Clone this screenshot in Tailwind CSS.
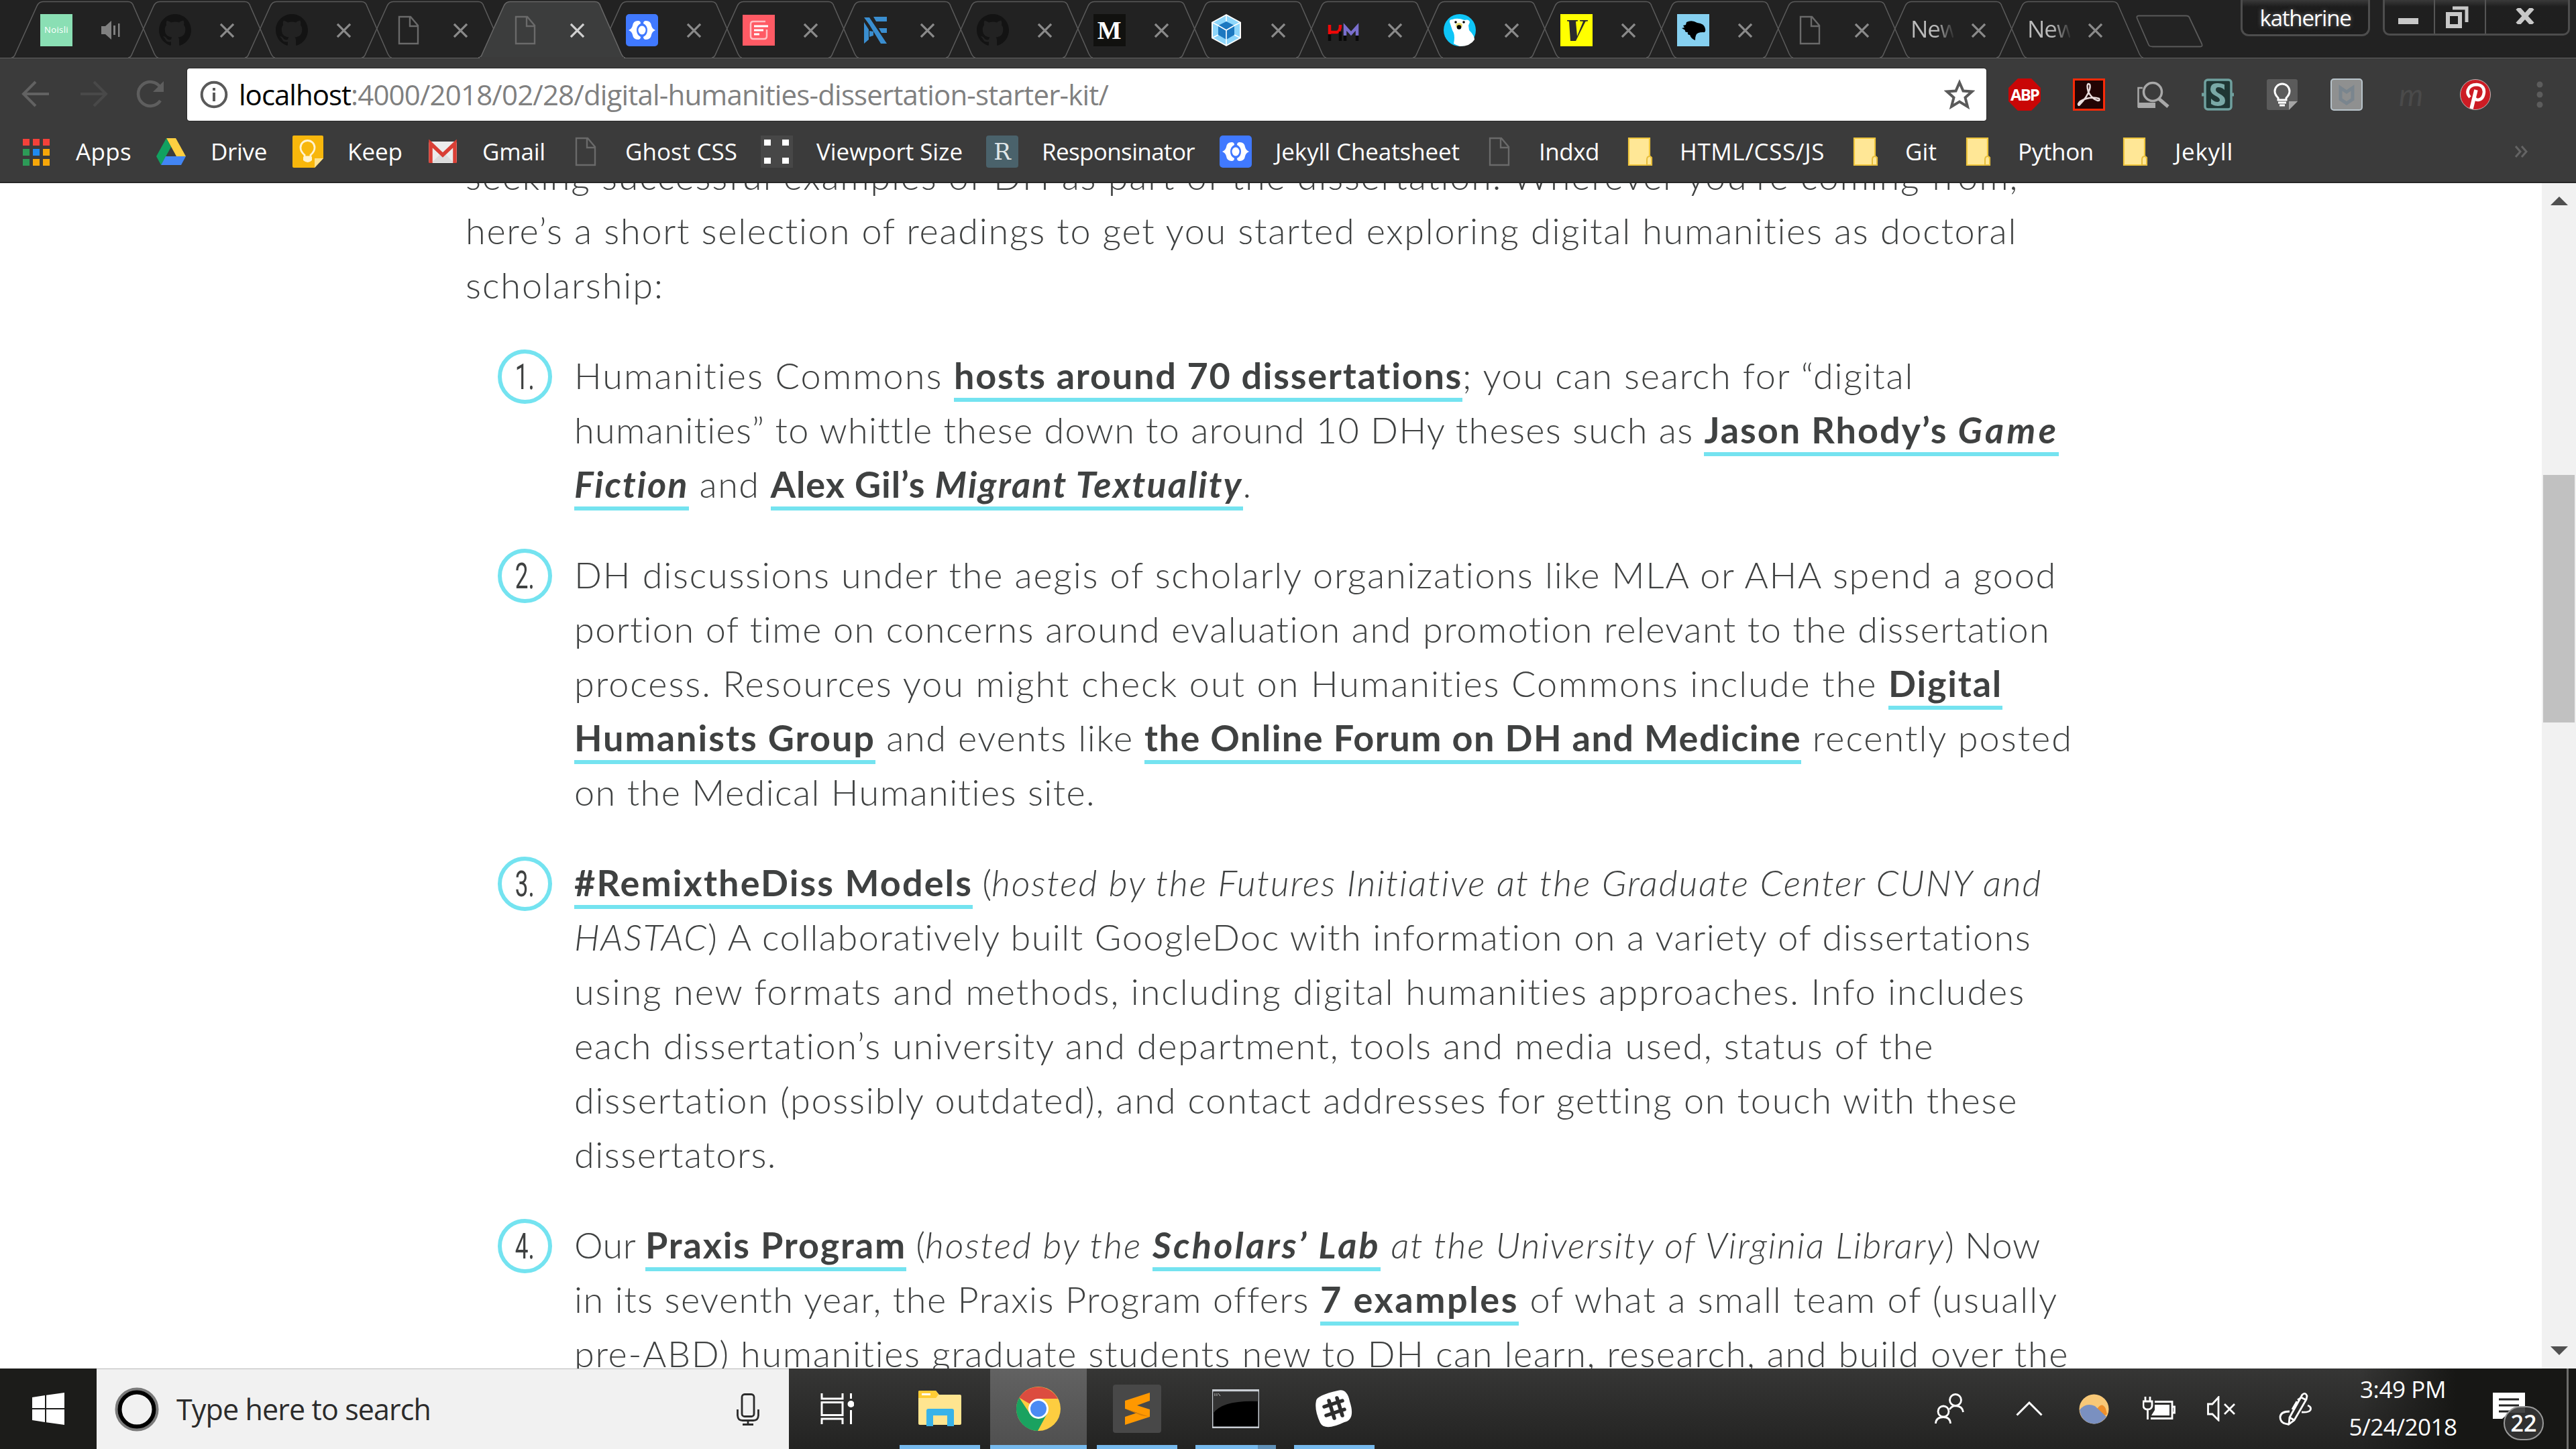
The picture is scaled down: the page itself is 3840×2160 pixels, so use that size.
<!DOCTYPE html>
<html lang="en">
<head>
<meta charset="utf-8">
<title>Digital Humanities Dissertation Starter Kit</title>
<script src="https://cdn.jsdelivr.net/npm/@tailwindcss/browser@4"></script>
</head>
<body class="w-[3840px] h-[2160px] overflow-hidden bg-white flex flex-col font-['Open_Sans','Noto_Sans',sans-serif]">
<svg width="0" height="0" class="absolute">
  <defs>
    <symbol id="tab" viewBox="0 0 218 90" overflow="visible"><path d="M-1 86 Q3 86 5 80 L37 9 Q40 2.500 46 2.500 H173 Q179 2.500 181 9 L212 80 Q215 86 218 86"/></symbol>
    <symbol id="x" viewBox="0 0 24 24"><path d="M2 2 L22 22 M22 2 L2 22" fill="none" stroke="currentColor" stroke-width="3.400"/></symbol>
    <symbol id="page" viewBox="0 0 48 48"><path d="M10 4 H27 L38 17 V44 H10 Z M26 5 V18 H38" fill="none" stroke="#6a6a6a" stroke-width="2.400"/></symbol>
    <symbol id="cat" viewBox="0 0 16 16"><path fill="#131313" d="M8 0C3.580 0 0 3.580 0 8c0 3.540 2.290 6.530 5.470 7.590.4.070.55-.17.55-.38 0-.19-.01-.82-.01-1.490-2.010.37-2.530-.49-2.690-.94-.09-.23-.48-.94-.82-1.130-.28-.15-.68-.52-.01-.53.63-.01 1.080.58 1.230.82.72 1.210 1.870.87 2.330.66.07-.52.28-.87.51-1.070-1.780-.2-3.640-.89-3.640-3.950 0-.87.31-1.590.82-2.150-.08-.2-.36-1.020.08-2.120 0 0 .67-.21 2.200.82.64-.18 1.320-.27 2-.27s1.360.09 2 .27c1.530-1.040 2.200-.82 2.200-.82.44 1.100.16 1.920.08 2.120.51.56.82 1.270.82 2.150 0 3.070-1.870 3.750-3.650 3.950.29.25.54.73.54 1.480 0 1.070-.01 1.930-.01 2.200 0 .21.15.46.55.38A8.010 8.010 0 0 0 16 8c0-4.420-3.580-8-8-8"/></symbol>
    <symbol id="brace" viewBox="0 0 48 48"><rect width="48" height="48" rx="5" fill="#4079ff"/><path d="M18 10Q11 10 10 17Q9 22 4 24Q9 26 10 31Q11 38 18 38Q22 38 22 34Q16 31 16 24Q16 17 22 14Q22 10 18 10zM30 10Q37 10 38 17Q39 22 44 24Q39 26 38 31Q37 38 30 38Q26 38 26 34Q32 31 32 24Q32 17 26 14Q26 10 30 10z" fill="#fff"/><ellipse cx="24" cy="24" rx="5.500" ry="6.500" fill="#fff"/></symbol>
    <symbol id="folder" viewBox="0 0 48 48"><path d="M7 4 H38 V31 L41 33 V44 H7 Z" fill="#ffe796" stroke="#f0c63c" stroke-width="2.200"/><path d="M34 44 V36 Q34 31 38 31 Q41 31 41 36 V44 Z" fill="#ffe796" stroke="#e6bd3c" stroke-width="2"/></symbol>
  </defs>
</svg>

<!-- tab strip -->
<header class="relative h-[86px] shrink-0 bg-[#222] flex">
  <div id="tabs" class="flex w-[3180px] shrink-0 pl-[38px]">
    <div>
      <div class="relative mt-[4px] -ml-[3px] w-[48px] h-[48px] bg-[#8adfb4] text-white text-[13px] flex items-center justify-center shrink-0"><span data-w="36">Noisli</span></div>
      <svg class="relative mt-[4px] ml-[43px]" width="28" height="28" viewBox="0 0 28 28" fill="#808080"><path d="M0 8h6l9-8v28l-9-8H0z"/><path d="M18 7h3v14h-3zM25 4h2.500v20H25z"/></svg></div>
    <div data-close><svg class="relative mt-[4px]" width="48" height="48"><use href="#cat"/></svg></div>
    <div data-close><svg class="relative mt-[4px]" width="48" height="48"><use href="#cat"/></svg></div>
    <div data-close><svg class="relative mt-[4px]" width="48" height="48"><use href="#page"/></svg></div>
    <div data-close data-active><svg class="relative mt-[4px]" width="48" height="48"><use href="#page"/></svg></div>
    <div data-close><svg class="relative mt-[4px]" width="48" height="48"><use href="#brace"/></svg></div>
    <div data-close><svg class="relative mt-[4px]" width="48" height="48" viewBox="0 0 48 48"><rect y="1" width="48" height="46" fill="#ff5a64"/><path d="M34 11H16q-4 0-4 4v18q0 4 4 4h16q4 0 4-4V23" fill="none" stroke="#ffc0c4" stroke-width="2.500"/><path d="M17 18h21M17 24h14M17 30h8" stroke="#fff" stroke-width="3"/></svg></div>
    <div data-close><svg class="relative mt-[4px]" width="48" height="48" viewBox="0 0 48 48" fill="#3a8ed0"><path d="M7 5h8l26 39h-9L15 16zM7 12l7 11v15l-7 6zM21 4h20v7H25zM29 21h12v7h-8zM15 25l6 1v6l-6 2z"/></svg></div>
    <div data-close><svg class="relative mt-[4px]" width="48" height="48"><use href="#cat"/></svg></div>
    <div data-close><div class="relative mt-[4px] w-[48px] h-[48px] shrink-0 bg-[#11110f] text-white font-bold text-[38px] leading-none flex items-center justify-center font-['Liberation_Serif',serif]">M</div></div>
    <div data-close><svg class="relative mt-[4px]" width="48" height="48" viewBox="0 0 48 48"><path d="M24 0L46 12V36L24 48L2 36V12z" fill="#fff"/><path d="M24 2L44 13V35L24 46L4 35V13z" fill="#8ed6fb"/><path d="M24 11L36 17V31L24 38L12 31V17z" fill="#1c78c0"/><path d="M24 2V11M24 38V46M12 17L4 13M36 17L44 13M12 31L4 35M36 31L44 35M12 17L24 24L36 17M24 24V38" stroke="#fff" stroke-width="1.600" fill="none"/></svg></div>
    <div data-close><svg class="relative mt-[4px]" width="48" height="48" viewBox="0 0 48 48"><path d="M4 16V30M4 27H15Q20 26 20 16" fill="none" stroke="#f00808" stroke-width="4.500"/><path d="M27 32V19L36 29L45 19V32" fill="none" stroke="#7a6fce" stroke-width="4.500"/><path d="M4 30V40M20 26V40M27 32V40M45 32V40" stroke="#0a0a0a" stroke-width="4.500"/></svg></div>
    <div data-close><svg class="relative mt-[4px]" width="48" height="48" viewBox="0 0 48 48"><circle cx="24" cy="24" r="24" fill="#0ec5f7"/><path d="M9 12q-1-4 4-4q8-3 18 1q7-2 8 3l-2 5l1 7q8 8 8 14q-6 10-22 10q-6-2-9-4q2-10 0-16L13 24z" fill="#fff"/><ellipse cx="23" cy="17" rx="5" ry="4" fill="#e6dc72"/><circle cx="18" cy="12" r="1.800"/><circle cx="30" cy="12" r="1.800"/><circle cx="23" cy="19.500" r="3.300"/></svg></div>
    <div data-close><svg class="relative mt-[4px]" width="48" height="48" viewBox="0 0 48 48"><rect width="48" height="48" fill="#ff0"/><path d="M10 9H26V10.500L23 11L25 33L34 11L29 10.500V9H41V10.500L37.500 11L23 40H15L13 11L10 10.500z" fill="#2a2a2e"/></svg></div>
    <div data-close><svg class="relative mt-[4px]" width="48" height="48" viewBox="0 0 48 48"><rect width="48" height="48" fill="#86d0f0"/><path d="M14 12q8-4 16 1q11 1 12 9q1 6-3 5q-10 0-11 5q-1 2-1 7q-6-2-8-8q-4 0-3-4q-5 0-4-3l-5-3l4-1l-2-3l4-1z" fill="#000"/></svg></div>
    <div data-close><svg class="relative mt-[4px]" width="48" height="48"><use href="#page"/></svg></div>
    <div data-close><span class="relative w-[64px] -mr-[16px] shrink-0 overflow-hidden text-[35px] leading-[48px] text-transparent bg-clip-text bg-linear-to-r from-[#bbb] from-60% to-[#333]"><span data-w="70">New</span></span></div>
    <div data-close><span class="relative w-[64px] -mr-[16px] shrink-0 overflow-hidden text-[35px] leading-[48px] text-transparent bg-clip-text bg-linear-to-r from-[#bbb] from-60% to-[#333]"><span data-w="70">New</span></span></div>
  </div>
  <svg class="mt-[21px] ml-[3px] shrink-0" width="104" height="52" viewBox="0 0 104 52"><path d="M5 2.500H76Q80 2.500 81 6L99 44Q101 48.500 97 48.500H26Q21 48.500 20 46L3 7Q1 2.500 5 2.500z" fill="#232323" stroke="#5a5a5a" stroke-width="1.800"/></svg>
  <div class="ml-[53px] w-[193px] h-[54px] shrink-0 rounded-b-[12px] border-3 border-t-0 border-[#4d4d4d] bg-linear-to-b from-[#3a3a3a] to-[#1d1d1d] to-20% text-white text-[33px] leading-[54px] flex justify-center"><span data-w="136" class="[text-shadow:0_0_6px_#777]">katherine</span></div>
  <div class="ml-[19px] w-[279px] h-[53px] shrink-0 rounded-b-[10px] border-3 border-t-0 border-[#4d4d4d] bg-linear-to-b from-[#3a3a3a] to-[#1f1f1f] to-20% flex text-[#c8c8c8]">
    <div class="w-[75px] border-r-2 border-[#555] flex justify-center"><div class="mt-[27px] mr-[4px] w-[30px] h-[9px] bg-current"></div></div>
    <div class="w-[76px] border-r-2 border-[#555] flex justify-center"><svg class="mt-[8px] mr-[8px]" width="34" height="34" viewBox="0 0 34 34" fill="none" stroke="currentColor"><rect x="3" y="13" width="18" height="18" stroke-width="6"/><path d="M10 4H31V25" stroke-width="5"/></svg></div>
    <div class="flex-1 flex justify-center"><svg class="mt-[12px] mr-[6px]" width="28" height="24" viewBox="0 0 28 24"><path d="M3 0L25 24M25 0L3 24" stroke="currentColor" stroke-width="7"/></svg></div>
  </div>
</header>

<!-- toolbar -->
<div class="h-[187px] shrink-0 bg-[#3b3b3b] border-t border-[#636363] border-b-2 border-b-[#262626] flex flex-col">
  <div class="h-[94px] shrink-0 flex items-start pt-[15px]">
    <svg class="mt-[16px] ml-[32px]" width="44" height="44" viewBox="0 0 44 44" fill="none" stroke="#626262" stroke-width="4"><path d="M41 22H4M21 4L3 22L21 40"/></svg>
    <svg class="mt-[16px] ml-[41px]" width="44" height="44" viewBox="0 0 44 44" fill="none" stroke="#494949" stroke-width="4"><path d="M3 22H40M23 4L41 22L23 40"/></svg>
    <svg class="mt-[16px] ml-[40px]" width="46" height="46" viewBox="0 0 46 46" fill="none" stroke="#5e5e5e" stroke-width="4.500"><path d="M38 12A18 18 0 1 0 38 32"/><path d="M43 3V19H27z" fill="#5e5e5e" stroke="none"/></svg>
    <div class="ml-[32px] w-[2682px] h-[78px] shrink-0 bg-white rounded-[3px] flex items-center outline-1 outline-[#2a2a2a]">
      <svg class="ml-[19px]" width="42" height="42" viewBox="0 0 42 42"><circle cx="21" cy="21" r="18.300" fill="none" stroke="#5a5a5a" stroke-width="4"/><path d="M19 18h4v13h-4zM19 11h4v4h-4z" fill="#5a5a5a"/></svg>
      <div class="ml-[16px] flex text-[42px] leading-[76px] text-[#808080]"><span data-w="167" class="text-black">localhost</span><span data-w="1129">:4000/2018/02/28/digital-humanities-dissertation-starter-kit/</span></div>
      <svg class="ml-auto mr-[17px]" width="46" height="46" viewBox="0 0 46 46"><path d="M23 5L28.500 17.500L41.500 18.500L31.500 27.500L35 41L23 33.500L11 41L14.500 27.500L4.500 18.500L17.500 17.500z" fill="none" stroke="#5a5a5a" stroke-width="4"/></svg>
    </div>
    <div class="ml-[33px] mt-[15px] flex gap-[48px] items-center">
      <div class="w-[48px] h-[48px] bg-[#c90606] [clip-path:polygon(29%_0,71%_0,100%_29%,100%_71%,71%_100%,29%_100%,0_71%,0_29%)] text-white font-bold text-[24px] flex items-center justify-center"><span data-w="42">ABP</span></div>
      <svg width="48" height="48" viewBox="0 0 48 48"><rect x="1.500" y="1.500" width="45" height="45" fill="#220404" stroke="#fa2a08" stroke-width="3"/><path d="M23 8q4 0 2 8q-3 11-15 23q-2 2-2-1q2-5 12-8q11-3 19 0q2 3-2 3q-8-2-14-13q-3-11 0-12z" fill="none" stroke="#e9dcdc" stroke-width="2.500"/></svg>
      <svg width="48" height="48" viewBox="0 0 48 48" fill="none" stroke="#a8a8a8"><circle cx="23" cy="20" r="13.500" stroke-width="3.500"/><path d="M32 30L46 42" stroke-width="5"/><path d="M8 14H1.500V42H26" stroke-width="2.500"/><path d="M1 40H27" stroke-width="8"/></svg>
      <svg width="48" height="48" viewBox="0 0 48 48"><rect x="5" y="2" width="39" height="44" rx="4" fill="#1f3634" stroke="#6fa09e" stroke-width="3.500"/><path d="M0 24h5M43 24h5" stroke="#6fa09e" stroke-width="5"/><path d="M34 9v8q-4-4-9-4q-4 0-4 4q0 3 6 6q8 4 8 10q0 8-11 8q-5 0-10-3v-8q5 5 9 5q4 0 4-3q0-3-6-6q-8-4-8-10q0-9 11-9q5 0 10 2z" fill="#79a8a6"/></svg>
      <svg width="48" height="48" viewBox="0 0 48 48"><path d="M4 1H44a3 3 0 0 1 3 3V34L34 47H4a3 3 0 0 1-3-3V4a3 3 0 0 1 3-3z" fill="#5b5b5b"/><path d="M47 34L34 47V34z" fill="#a5a5a5"/><path d="M18 29Q13 24 13 19a11 11 0 0 1 22 0Q35 24 30 29V32H18zM18 36h12" fill="none" stroke="#fff" stroke-width="3"/><path d="M20 40h8" stroke="#fff" stroke-width="3"/></svg>
      <svg width="48" height="48" viewBox="0 0 48 48"><rect x="1" y="1" width="46" height="46" rx="4" fill="#8f9090" stroke="#b7c3ca" stroke-width="2"/><path d="M15 14L24 20L33 14V31L24 37L15 31z" fill="none" stroke="#7a858e" stroke-width="5"/></svg>
      <div class="w-[48px] h-[48px] flex items-center justify-center text-[#4a4a4a] italic text-[46px] leading-[40px] font-[Lato,sans-serif]"><span>m</span></div>
      <svg width="48" height="48" viewBox="0 0 48 48"><circle cx="24" cy="24" r="22.500" fill="#cc1c24" stroke="#b9b9b9" stroke-width="1"/><path d="M16 28q-5-5-3-11q3-8 13-8q11 1 11 11q-1 11-9 12q-4 0-5-3" fill="none" stroke="#fff" stroke-width="4.500"/><path d="M25 17L18 45" stroke="#fff" stroke-width="5.500"/></svg>
      <svg width="48" height="48" viewBox="0 0 48 48" fill="#5c5c5c"><circle cx="24" cy="9" r="4.500"/><circle cx="24" cy="24" r="4.500"/><circle cx="24" cy="39" r="4.500"/></svg>
    </div>
  </div>
  <nav class="h-[92px] flex items-center pl-[30px] text-white text-[35px] leading-[48px] [&_svg]:shrink-0">
    <div class="flex items-center gap-[35px] w-[201px] shrink-0"><svg width="48" height="48" viewBox="0 0 48 48"><path d="M4 5h10v10H4zM19 5h10v10H19zM34 5h10v10H34z" fill="#f3413a"/><path d="M4 20h10v10H4zM4 35h10v10H4z" fill="#2d9a57"/><path d="M19 20h10v10H19z" fill="#1f8af0"/><path d="M34 20h10v10H34zM19 35h10v10H19zM34 35h10v10H34z" fill="#f6a609"/></svg><span data-w="83">Apps</span></div>
    <div class="flex items-center gap-[35px] w-[204px] shrink-0"><svg width="48" height="48" viewBox="0 0 48 48"><path d="M17 4H31L46 31H32z" fill="#ffcf41"/><path d="M17 4L24 17L9 44L2 31z" fill="#11a160"/><path d="M16 31H46L39 44H9z" fill="#4285f4"/></svg><span data-w="84">Drive</span></div>
    <div class="flex items-center gap-[35px] w-[201px] shrink-0"><svg width="48" height="48" viewBox="0 0 48 48"><path d="M3 0H45a2 2 0 0 1 2 2V34L34 48H3a2 2 0 0 1-2-2V2a2 2 0 0 1 2-2z" fill="#f8b70c"/><path d="M47 34L34 48V34z" fill="#fde28f"/><path d="M19 29Q13 24 13 18a10.500 10.500 0 0 1 21 0Q34 24 28 29V32H19z" fill="none" stroke="#fff3cf" stroke-width="2.800"/><path d="M17 32h13v5q-6 6-13 0z" fill="#fff3cf"/></svg><span data-w="82">Keep</span></div>
    <div class="flex items-center gap-[35px] w-[213px] shrink-0"><svg width="48" height="48" viewBox="0 0 48 48"><rect x="3" y="9" width="42" height="32" rx="3" fill="#ececec"/><path d="M8 40L24 24L40 40z" fill="#dcdcdc"/><path d="M6 41V12L24 29L42 12V41" fill="none" stroke="#d93f35" stroke-width="5.500"/></svg><span data-w="94">Gmail</span></div>
    <div class="flex items-center gap-[35px] w-[285px] shrink-0"><svg width="48" height="48"><use href="#page"/></svg><span data-w="167">Ghost CSS</span></div>
    <div class="flex items-center gap-[35px] w-[336px] shrink-0"><svg width="48" height="48" viewBox="0 0 48 48"><rect width="48" height="48" fill="#474747"/><path d="M5 6h10v9H5zM32 6h10v9H32zM5 33h10v9H5zM32 33h10v9H32z" fill="#fff"/></svg><span data-w="218">Viewport Size</span></div>
    <div class="flex items-center gap-[35px] w-[348px] shrink-0"><div class="w-[48px] h-[48px] shrink-0 rounded-[4px] bg-[#4a626b] text-[#e0e6e8] text-[34px] leading-[48px] flex justify-center font-['DejaVu_Serif',serif] font-extralight">R</div><span data-w="228">Responsinator</span></div>
    <div class="flex items-center gap-[35px] w-[393px] shrink-0"><svg width="48" height="48"><use href="#brace"/></svg><span data-w="275">Jekyll Cheatsheet</span></div>
    <div class="flex items-center gap-[35px] w-[210px] shrink-0"><svg width="48" height="48"><use href="#page"/></svg><span data-w="90">Indxd</span></div>
    <div class="flex items-center gap-[35px] w-[336px] shrink-0"><svg width="48" height="48"><use href="#folder"/></svg><span data-w="216">HTML/CSS/JS</span></div>
    <div class="flex items-center gap-[35px] w-[168px] shrink-0"><svg width="48" height="48"><use href="#folder"/></svg><span data-w="47">Git</span></div>
    <div class="flex items-center gap-[35px] w-[234px] shrink-0"><svg width="48" height="48"><use href="#folder"/></svg><span data-w="113">Python</span></div>
    <div class="flex items-center gap-[35px] shrink-0"><svg width="48" height="48"><use href="#folder"/></svg><span data-w="87">Jekyll</span></div>
    <svg class="ml-auto mr-[71px]" width="20" height="18" viewBox="0 0 20 18" fill="none" stroke="#646464" stroke-width="3"><path d="M1 1L8 9L1 17M10 1L17 9L10 17"/></svg>
  </nav>
</div>

<!-- page -->
<div class="h-[1767px] shrink-0 flex overflow-hidden">
  <article class="w-[3789px] shrink-0 pl-[694px] text-[#3f4141] font-['Lato_Light',Lato,sans-serif] font-light text-[54px] leading-[81px]">
    <div class="mt-[-51px] mb-[54px]">
      <div class="flex h-[81px]"><span data-w="2316">seeking successful examples of DH as part of the dissertation. Wherever you’re coming from,</span></div>
      <div class="flex h-[81px]"><span data-w="2315">here’s a short selection of readings to get you started exploring digital humanities as doctoral</span></div>
      <div class="flex h-[81px]"><span data-w="296">scholarship:</span></div>
    </div>
    <div class="flex pl-[48px] mb-[54px]">
      <div class="mt-[2px] mr-[33px] w-[81px] h-[81px] shrink-0 rounded-full border-6 border-[#74e3f0] flex items-center justify-center font-[Roboto,sans-serif] font-normal text-[54px] leading-[69px]"><span class="inline-block scale-x-[.65]">1.</span></div>
      <div>
        <div class="flex h-[81px]"><span data-w="567">Humanities Commons </span><span data-w="759" class="h-[80px] border-b-6 border-[#74e3f0] font-[Lato] font-bold">hosts around 70 dissertations</span><span data-w="673">; you can search for “digital</span></div>
        <div class="flex h-[81px]"><span data-w="1684">humanities” to whittle these down to around 10 DHy theses such as </span><span data-w="378" class="h-[80px] border-b-6 border-[#74e3f0] font-[Lato] font-bold">Jason Rhody’s </span><span data-w="151" class="h-[80px] border-b-6 border-[#74e3f0] font-[Lato] font-bold italic">Game</span></div>
        <div class="flex h-[81px]"><span data-w="170" class="h-[80px] border-b-6 border-[#74e3f0] font-[Lato] font-bold italic">Fiction</span><span data-w="122"> and </span><span data-w="245" class="h-[80px] border-b-6 border-[#74e3f0] font-[Lato] font-bold">Alex Gil’s </span><span data-w="459" class="h-[80px] border-b-6 border-[#74e3f0] font-[Lato] font-bold italic">Migrant Textuality</span><span data-w="11">.</span></div>
      </div>
    </div>
    <div class="flex pl-[48px] mb-[54px]">
      <div class="mt-[2px] mr-[33px] w-[81px] h-[81px] shrink-0 rounded-full border-6 border-[#74e3f0] flex items-center justify-center font-[Roboto,sans-serif] font-normal text-[54px] leading-[69px]"><span class="inline-block scale-x-[.65]">2.</span></div>
      <div>
        <div class="flex h-[81px]"><span data-w="2211">DH discussions under the aegis of scholarly organizations like MLA or AHA spend a good</span></div>
        <div class="flex h-[81px]"><span data-w="2205">portion of time on concerns around evaluation and promotion relevant to the dissertation</span></div>
        <div class="flex h-[81px]"><span data-w="1960">process. Resources you might check out on Humanities Commons include the </span><span data-w="170" class="h-[80px] border-b-6 border-[#74e3f0] font-[Lato] font-bold">Digital</span></div>
        <div class="flex h-[81px]"><span data-w="449" class="h-[80px] border-b-6 border-[#74e3f0] font-[Lato] font-bold">Humanists Group</span><span data-w="401"> and events like </span><span data-w="979" class="h-[80px] border-b-6 border-[#74e3f0] font-[Lato] font-bold">the Online Forum on DH and Medicine</span><span data-w="405"> recently posted</span></div>
        <div class="flex h-[81px]"><span data-w="778">on the Medical Humanities site.</span></div>
      </div>
    </div>
    <div class="flex pl-[48px] mb-[54px]">
      <div class="mt-[2px] mr-[33px] w-[81px] h-[81px] shrink-0 rounded-full border-6 border-[#74e3f0] flex items-center justify-center font-[Roboto,sans-serif] font-normal text-[54px] leading-[69px]"><span class="inline-block scale-x-[.65]">3.</span></div>
      <div>
        <div class="flex h-[81px]"><span data-w="594" class="h-[80px] border-b-6 border-[#74e3f0] font-[Lato] font-bold">#RemixtheDiss Models</span><span data-w="28"> (</span><span data-w="1565" class="italic">hosted by the Futures Initiative at the Graduate Center CUNY and</span></div>
        <div class="flex h-[81px]"><span data-w="199" class="italic">HASTAC</span><span data-w="1976">) A collaboratively built GoogleDoc with information on a variety of dissertations</span></div>
        <div class="flex h-[81px]"><span data-w="2164">using new formats and methods, including digital humanities approaches. Info includes</span></div>
        <div class="flex h-[81px]"><span data-w="2028">each dissertation’s university and department, tools and media used, status of the</span></div>
        <div class="flex h-[81px]"><span data-w="2152">dissertation (possibly outdated), and contact addresses for getting on touch with these</span></div>
        <div class="flex h-[81px]"><span data-w="302">dissertators.</span></div>
      </div>
    </div>
    <div class="flex pl-[48px]">
      <div class="mt-[2px] mr-[33px] w-[81px] h-[81px] shrink-0 rounded-full border-6 border-[#74e3f0] flex items-center justify-center font-[Roboto,sans-serif] font-normal text-[54px] leading-[69px]"><span class="inline-block scale-x-[.65]">4.</span></div>
      <div>
        <div class="flex h-[81px]"><span data-w="106">Our </span><span data-w="389" class="h-[80px] border-b-6 border-[#74e3f0] font-[Lato] font-bold">Praxis Program</span><span data-w="28"> (</span><span data-w="339" class="italic">hosted by the </span><span data-w="340" class="h-[80px] border-b-6 border-[#74e3f0] font-[Lato] font-bold italic">Scholars’ Lab</span><span data-w="841" class="italic"> at the University of Virginia Library</span><span data-w="143">) Now</span></div>
        <div class="flex h-[81px]"><span data-w="1110">in its seventh year, the Praxis Program offers </span><span data-w="296" class="h-[80px] border-b-6 border-[#74e3f0] font-[Lato] font-bold">7 examples</span><span data-w="804"> of what a small team of (usually</span></div>
        <div class="flex h-[81px]"><span data-w="2229">pre-ABD) humanities graduate students new to DH can learn, research, and build over the</span></div>
      </div>
    </div>
  </article>
  <div class="w-[51px] shrink-0 bg-[#f1f1f1] flex flex-col items-center">
    <svg class="mt-[20px]" width="26" height="13" viewBox="0 0 26 13"><path d="M13 0L26 13H0z" fill="#505050"/></svg>
    <div class="mt-[402px] w-[47px] h-[369px] bg-[#c1c1c1]"></div>
    <svg class="mt-auto mb-[20px]" width="26" height="13" viewBox="0 0 26 13"><path d="M13 13L26 0H0z" fill="#505050"/></svg>
  </div>
</div>

<!-- taskbar -->
<footer class="h-[120px] shrink-0 flex bg-linear-to-b from-[#363635] to-[#232322]">
  <div class="w-[144px] shrink-0 bg-[#1c1c1a] flex items-center justify-center"><svg width="48" height="48" viewBox="0 0 48 48" fill="#fff"><path d="M0 7L19 4V23H0zM21 3.700L48 0V23H21zM0 25H19V44L0 41zM21 25H48V48L21 44.300z"/></svg></div>
  <div class="w-[1032px] shrink-0 bg-[#f1f1f1] border-t border-[#b8b8b8] flex items-center">
    <svg class="ml-[27px]" width="66" height="66" viewBox="0 0 66 66"><circle cx="33" cy="33" r="30" fill="none" stroke="#7b7b7b" stroke-width="5"/><circle cx="33" cy="33" r="25.500" fill="none" stroke="#000" stroke-width="6"/></svg>
    <span class="ml-[26px] text-[43px] leading-[60px] text-[#2b2b2b]"><span data-w="379">Type here to search</span></span>
    <svg class="ml-auto mr-[44px]" width="34" height="48" viewBox="0 0 34 48" fill="none" stroke="#2b2b2b" stroke-width="2.800"><rect x="8" y="1.500" width="18" height="33" rx="4"/><path d="M1.500 24V33Q2 40.500 9 40.500H25Q32 40.500 32.500 33V24M17 41V46M9 46.500H25"/></svg>
  </div>
  <div class="w-[144px] shrink-0 flex items-center justify-center"><svg width="50" height="46" viewBox="0 0 50 46" fill="none" stroke="#fff" stroke-width="3"><path d="M2 0V8H33V0M2 46V38H33V46M45.500 0V8M45.500 25V46"/><rect x="2" y="13.500" width="31" height="19"/><circle cx="45.500" cy="16" r="3.500" fill="#fff"/></svg></div>
  <div class="ml-[21px] w-[120px] shrink-0 border-b-6 border-[#76b9ed] flex items-center justify-center pt-[6px]"><svg width="64" height="54" viewBox="0 0 64 54"><path d="M0 2Q0 0 2 0H26L31 6H62Q64 6 64 8V49Q64 51 62 51H2Q0 51 0 49z" fill="#ffe590"/><path d="M0 2Q0 0 2 0H26L30 6L26 11H0z" fill="#ffcc35"/><path d="M5 4h13v3H5z" fill="#fff"/><path d="M12 53V30Q12 27 15 27H50Q53 27 53 30V53H43V37H22V53z" fill="#38b3e9"/></svg></div>
  <div class="ml-[15px] w-[144px] shrink-0 border-b-6 border-[#76b9ed] bg-linear-to-b from-[#626262] to-[#505050] flex items-center justify-center pt-[6px]"><svg width="66" height="66" viewBox="0 0 66 66"><circle cx="33" cy="33" r="33" fill="#fdcd40"/><path d="M33 33L4.400 16.500A33 33 0 0 1 61.600 17.500L62 18H33z" fill="#dc4c3f"/><path d="M4.400 16.500A33 33 0 0 0 32 66L46 40L20 40z" fill="#1aa260"/><circle cx="33" cy="33" r="15" fill="#fff"/><circle cx="33" cy="33" r="12" fill="#4a8af4"/></svg></div>
  <div class="ml-[15px] w-[120px] shrink-0 border-b-6 border-[#76b9ed] flex items-center justify-center pt-[6px]"><div class="w-[72px] h-[72px] rounded-[4px] bg-[#484848] flex items-center justify-center"><svg width="37" height="48" viewBox="0 0 37 48"><path d="M0 12L37 0V12L18 19L37 25V36L0 48V36L18 30L0 24z" fill="#ff9800"/><path d="M0 24L37 36L24 34z" fill="#d87f06"/></svg></div></div>
  <div class="ml-[27px] w-[93px] shrink-0 border-b-6 border-[#76b9ed] flex items-center pl-[25px] pt-[6px]"><svg width="70" height="58" viewBox="0 0 70 58" class="shrink-0"><rect width="70" height="58" fill="#c9ced4"/><rect x="1.500" y="3.500" width="67" height="52" fill="#000"/><path d="M1.500 3.500H68.500V18Q15 16 1.500 36z" fill="#333"/><path d="M4 6v4M7 6v4M9 6l3 4" stroke="#bbb"/></svg></div>
  <div class="w-[27px] shrink-0 border-b-6 border-[#5f90b8]"></div>
  <div class="ml-[27px] w-[120px] shrink-0 border-b-6 border-[#76b9ed] flex items-center justify-center pt-[6px]"><svg width="56" height="56" viewBox="0 0 56 56"><path d="M33 1Q47-3 51 17Q60 44 43 48Q14 62 7 49Q-2 30 1 16Q2 8 33 1z" fill="#fff"/><path d="M20 16L28 42M32 12L40 38M13 25L40 16M16 38L43 29" stroke="#2d2d2d" stroke-width="5.500" stroke-linecap="round"/></svg></div>
  <div class="ml-auto w-[1790px] shrink-0 flex items-center pl-[834px] bg-linear-to-r from-transparent from-82% to-[#171715] to-90%">
    <svg class="shrink-0" width="44" height="46" viewBox="0 0 44 46" fill="none" stroke="#fff" stroke-width="2.800"><circle cx="31" cy="10" r="8.500"/><circle cx="13" cy="27" r="8"/><path d="M1.500 45Q2 35.500 13 35.500Q23 35.500 23.500 45M22 24Q26 18.500 31 18.500Q41.500 19 42.500 28"/></svg>
    <svg class="ml-[77px] shrink-0" width="40" height="22" viewBox="0 0 40 22" fill="none" stroke="#fff" stroke-width="3"><path d="M1.500 20.500L20 2L38.500 20.500"/></svg>
    <svg class="ml-[54px] shrink-0" width="45" height="45" viewBox="0 0 45 45"><circle cx="22.500" cy="22.500" r="22" fill="#f8c877"/><path d="M26 24Q34 10 40 22L42 30L36 34z" fill="#ee8f2a"/><path d="M1 24Q10 12 24 18L41 34Q34 44 22.500 44.500Q4 43 1 24z" fill="#7a90c0"/></svg>
    <svg class="ml-[50px] shrink-0" width="50" height="36" viewBox="0 0 50 36" fill="none" stroke="#fff" stroke-width="2.800"><path d="M4 0V6M11 0V6M1 7H14V14Q13 19 7.500 19Q2 19 1 14zM7.500 19V34"/><path d="M18 7.500H44V32.500H12M44 15H47.500V24H44"/><path d="M18 12H40V28H13L18 20z" fill="#fff" stroke="none"/></svg>
    <svg class="ml-[46px] shrink-0" width="44" height="38" viewBox="0 0 44 38" fill="none" stroke="#fff" stroke-width="2.800"><path d="M1.500 12H8L17 2V36L8 27H1.500zM26 12L41 27M41 12L26 27"/></svg>
    <svg class="ml-[63px] shrink-0" width="50" height="50" viewBox="0 0 50 50" fill="none" stroke="#fff" stroke-width="2.800"><path d="M35 4Q40 0 42 6L41 11L23 42L15 48L16 38z M33 8L41 12M16 38L23 42M28 12L34 8M27 14L20 26M16 48Q2 48 2 37Q3 29 16 29M43 20Q49 22 47 27Q44 31 34 30"/></svg>
    <div class="ml-[38px] w-[194px] shrink-0 flex flex-col items-center text-white text-[35px] leading-[56px] mt-[-2px]"><span data-w="128">3:49 PM</span><span data-w="161">5/24/2018</span></div>
    <div class="relative ml-[37px] w-[80px] h-[74px] shrink-0 mt-[26px]">
      <svg width="48" height="40" viewBox="0 0 48 40"><path d="M0 0H48V30H24L14 39H0z" fill="#fff"/><path d="M9 10H39M9 19H39M9 28H26" stroke="#222" stroke-width="3"/></svg>
      <div class="absolute left-[16px] top-[20px] w-[60px] h-[51px] flex justify-center"><div class="w-[60px] h-[51px] rounded-full border-2 border-[#9a9a9a] bg-[#333]/90 text-white text-[34px] leading-[46px] flex justify-center font-semibold"><span data-w="39">22</span></div></div>
    </div>
    <div class="ml-auto mr-[11px] w-[3px] h-[120px] shrink-0 bg-[#6e6e6c]"></div>
  </div>
</footer>

<script>
  // Every tab gets its outline and, except for the one that plays sound, a close button.
  document.querySelectorAll('#tabs > div').forEach(function (tab) {
    var active = tab.hasAttribute('data-active');
    tab.className = 'relative w-[174.07px] shrink-0 flex items-center pl-[25px]' + (active ? ' z-10' : '');
    tab.insertAdjacentHTML('afterbegin', active
      ? '<svg class="absolute left-[-20px] top-0 w-[218px] h-[90px] overflow-visible" fill="#3c3d3d" stroke="#666" stroke-width="1.6"><use href="#tab"/><path d="M1 85H216V90H1z" fill="#3b3b3b" stroke="none"/></svg>'
      : '<svg class="absolute left-[-20px] top-0 w-[218px] h-[90px] overflow-visible" fill="none" stroke="#5a5a5a" stroke-width="1.6"><use href="#tab"/></svg>');
    if (tab.hasAttribute('data-close')) {
      tab.insertAdjacentHTML('beforeend', active
        ? '<svg class="relative shrink-0 mt-[4px] ml-[42px] text-[#d0d0d0]" width="23" height="23"><use href="#x"/></svg>'
        : '<svg class="relative shrink-0 mt-[4px] ml-[42px] text-[#8a8a8a]" width="23" height="23"><use href="#x"/></svg>');
    }
  });

  // Spread the letters of each run so that it fills its measured column width.
  function fit() {
    document.querySelectorAll('[data-w]').forEach(function (el) {
      el.style.display = 'inline-block';
      el.style.whiteSpace = 'pre';
      el.style.flexShrink = '0';
      el.style.letterSpacing = '0px';
      var diff = Number(el.dataset.w) - el.getBoundingClientRect().width;
      el.style.letterSpacing = diff / el.textContent.length + 'px';
    });
  }
  fit();
  window.addEventListener('load', function () { fit(); document.fonts.ready.then(fit); setTimeout(fit, 100); });
</script>
</body>
</html>
